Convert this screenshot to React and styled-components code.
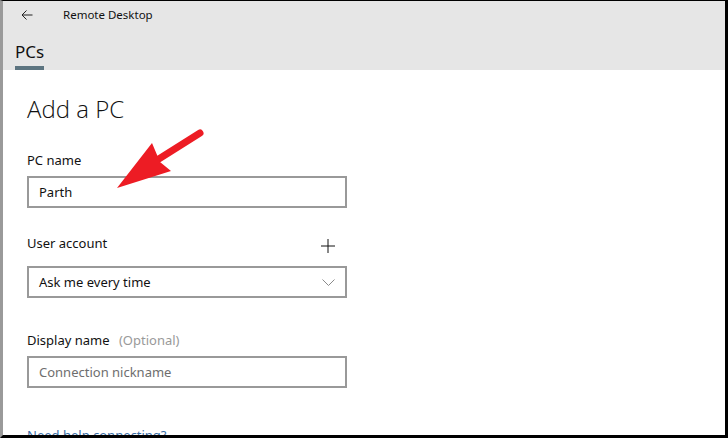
import React from "react";
import styled, { createGlobalStyle } from "styled-components";

const GlobalStyle = createGlobalStyle`
  html, body {
    margin: 0;
    padding: 0;
    background: #fff;
  }
  body {
    font-family: "Noto Sans", "Open Sans", sans-serif;
    color: #111;
  }
`;

const App = () => {
  return (
    <>
      <GlobalStyle />
      <Window>
        {/* window edge indicator on the left */}
        <EdgeMark />

        <Header>
          <TitleRow>
            <BackButton aria-label="Back">
              <svg width="12" height="10" viewBox="0 0 12 10">
                <path
                  d="M11.5 5H1M5.5 0.5L1 5l4.5 4.5"
                  fill="none"
                  stroke="#222"
                  strokeWidth="1"
                />
              </svg>
            </BackButton>
            <AppTitle>Remote Desktop</AppTitle>
          </TitleRow>
          <Tabs>
            <Tab active>PCs</Tab>
          </Tabs>
        </Header>

        <Content>
          <PageTitle>Add a PC</PageTitle>

          <Field>
            <LabelRow>
              <Label>PC name</Label>
            </LabelRow>
            <Box>
              <BoxText>Parth</BoxText>
            </Box>
          </Field>

          <Field>
            <LabelRow withAction>
              <Label>User account</Label>
              <PlusButton aria-label="Add account">
                <svg width="14" height="14" viewBox="0 0 14 14">
                  <path d="M7 0v14M0 7h14" stroke="#111" strokeWidth="1" />
                </svg>
              </PlusButton>
            </LabelRow>
            <Box>
              <BoxText>Ask me every time</BoxText>
              <svg width="13" height="7" viewBox="0 0 13 7">
                <path d="M0.5 0.5l6 6 6-6" fill="none" stroke="#8a8a8a" strokeWidth="1" />
              </svg>
            </Box>
          </Field>

          <Field>
            <LabelRow>
              <Label>
                Display name <Optional>(Optional)</Optional>
              </Label>
            </LabelRow>
            <Box>
              <BoxText placeholder>Connection nickname</BoxText>
            </Box>
          </Field>

          <HelpLink>Need help connecting?</HelpLink>
        </Content>

        {/* annotation arrow drawn over the form */}
        <Arrow width="100" height="80" viewBox="0 0 100 80">
          <path d="M44 42L90 13" stroke="#ed1c24" strokeWidth="7" strokeLinecap="round" />
          <polygon points="7,68 42,23 50,42 61,51" fill="#ed1c24" />
        </Arrow>
      </Window>
    </>
  );
};

const Window = styled.div`
  position: relative;
  width: 728px;
  height: 438px;
  box-sizing: border-box;
  border-top: 1px solid #000;
  border-right: 3px solid #000;
  border-bottom: 3px solid #000;
  border-left: 3px solid #9a9a9a;
  background: #fff;
  overflow: hidden;
  display: flex;
  flex-direction: column;
`;

const EdgeMark = styled.div`
  position: absolute;
  left: -2px;
  top: 67px;
  width: 2px;
  height: 60px;
  background: #000;
`;

const Header = styled.header`
  background: #e6e6e6;
  height: 69px;
  display: flex;
  flex-direction: column;
  flex-shrink: 0;
`;

const TitleRow = styled.div`
  height: 27px;
  display: flex;
  align-items: center;
  padding-left: 18px;
`;

const BackButton = styled.div`
  width: 12px;
  display: flex;
  align-items: center;
  margin-right: 30px;
`;

const AppTitle = styled.div`
  font-family: "Noto Sans", sans-serif;
  font-size: 11.5px;
  color: #111;
`;

const Tabs = styled.div`
  display: flex;
  padding-left: 12px;
  margin-top: auto;
`;

const Tab = styled.div`
  font-family: "Noto Sans", sans-serif;
  font-size: 17px;
  color: #111;
  padding-bottom: 2px;
  line-height: 24px;
  border-bottom: 4px solid ${(p) => (p.active ? "#5c7480" : "transparent")};
`;

const Content = styled.main`
  padding: 24px 0 0 24px;
  width: 320px;
  display: flex;
  flex-direction: column;
`;

const PageTitle = styled.h1`
  margin: 0 0 24px 0;
  font-family: "Open Sans", sans-serif;
  font-weight: 300;
  font-size: 24px;
  line-height: 30px;
  color: #111;
`;

const Field = styled.div`
  display: flex;
  flex-direction: column;
  margin-bottom: 30px;
`;

// a row with an action button sits a little higher and is taller
const LabelRow = styled.div`
  display: flex;
  align-items: flex-start;
  justify-content: space-between;
  height: ${(p) => (p.withAction ? "27px" : "20px")};
  margin: ${(p) => (p.withAction ? "-5px 0 6px 0" : "2px 0 6px 0")};
`;

const Label = styled.div`
  font-family: "Noto Sans", sans-serif;
  font-size: 13px;
  line-height: 20px;
  color: #111;
`;

const Optional = styled.span`
  color: #999;
  margin-left: 6px;
`;

const PlusButton = styled.div`
  display: flex;
  align-items: center;
  margin-right: 12px;
  margin-top: 6px;
`;

const Box = styled.div`
  box-sizing: border-box;
  height: 32px;
  border: 2px solid #999;
  display: flex;
  align-items: center;
  justify-content: space-between;
  padding: 0 10px;
  background: #fff;
`;

const BoxText = styled.span`
  font-family: "Noto Sans", sans-serif;
  font-size: 13px;
  color: ${(p) => (p.placeholder ? "#6e6e6e" : "#111")};
`;

const HelpLink = styled.a`
  font-family: "Noto Sans", sans-serif;
  font-size: 13px;
  color: #3a6ea5;
  margin-top: 8px;
`;

const Arrow = styled.svg`
  position: absolute;
  left: 107px;
  top: 119px;
`;

export default App;
